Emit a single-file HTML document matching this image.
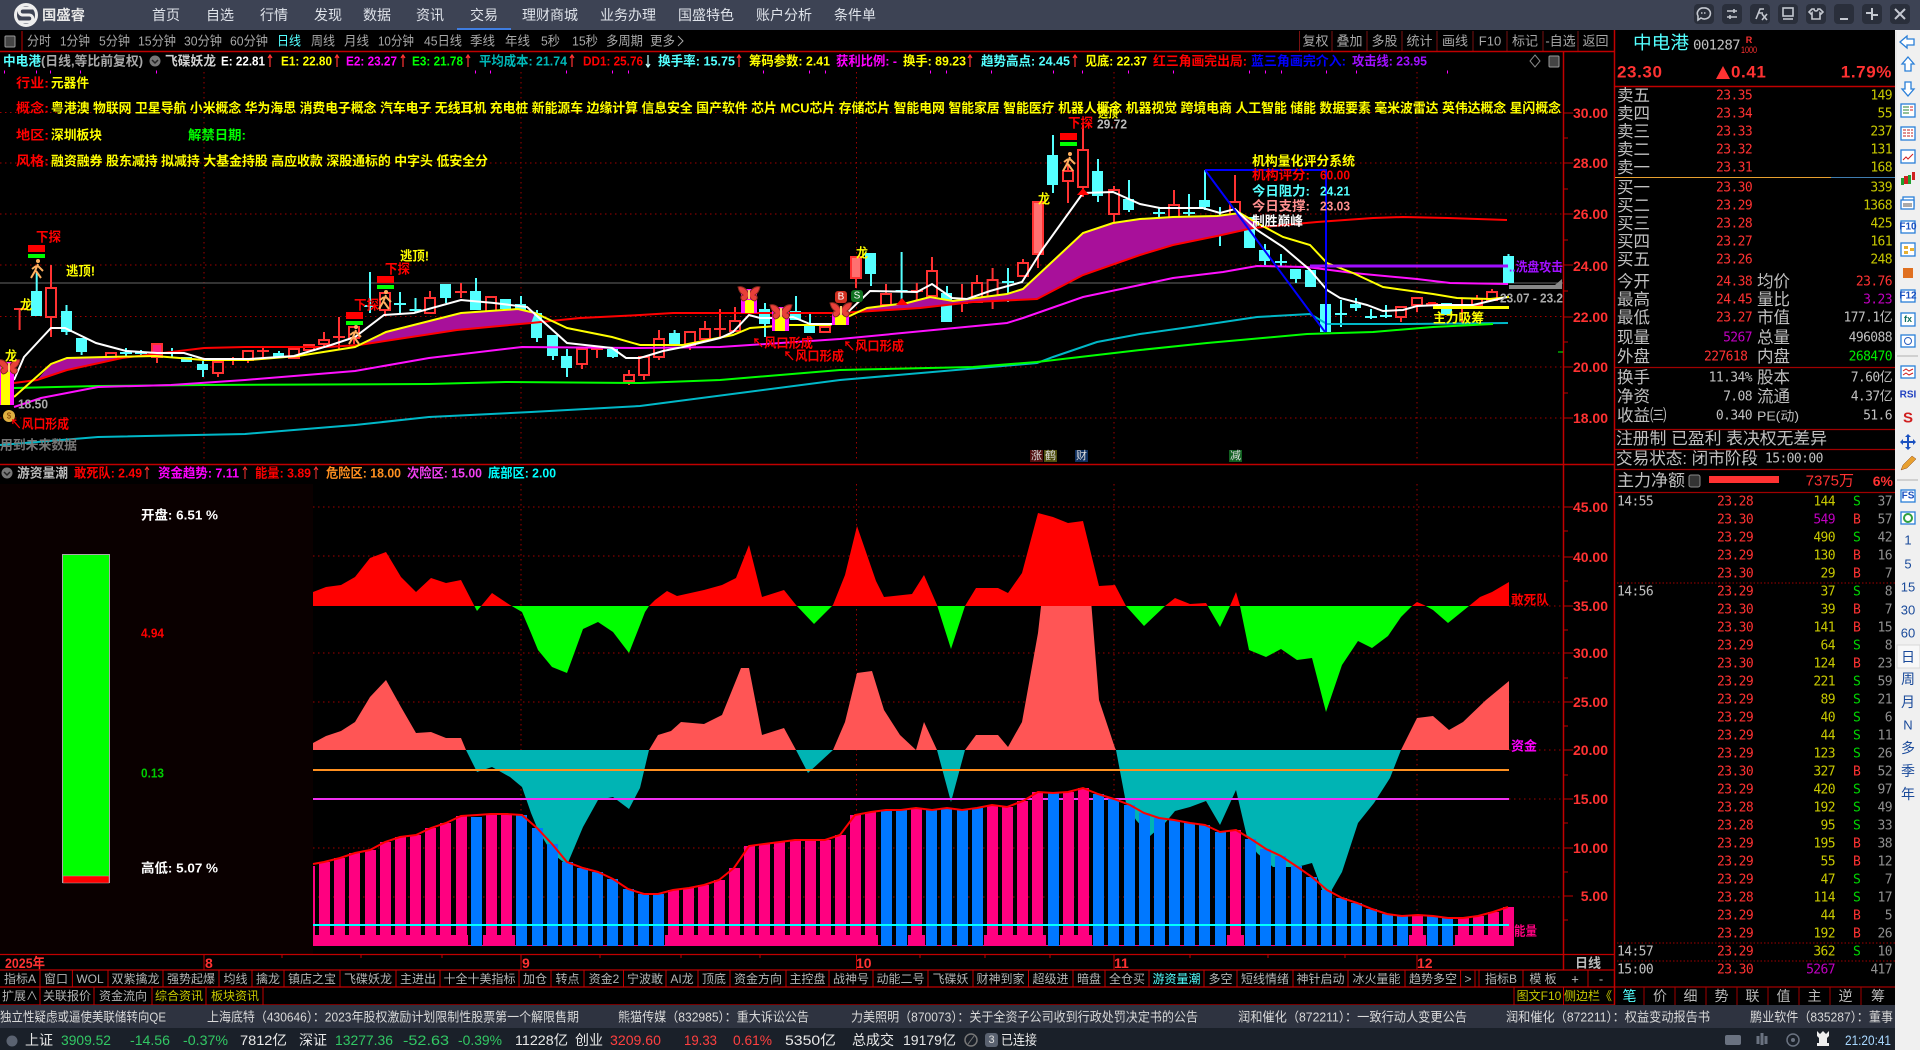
<!DOCTYPE html>
<html lang="zh-CN">
<head>
<meta charset="utf-8">
<title>国盛睿</title>
<style>
html,body{margin:0;padding:0;background:#000;overflow:hidden;width:1920px;height:1050px}
svg{display:block}
text{dominant-baseline:central;font-family:"Liberation Sans","Noto Sans CJK SC",sans-serif;font-size:13px}
.b text,text.b{font-weight:700}
.m text,text.m{font-family:"DejaVu Sans Mono","Liberation Mono",monospace;font-size:13px;letter-spacing:-.6px}
.e{text-anchor:end}
.c text,text.c{text-anchor:middle}
.l text{font-size:16.5px}
.s text{font-size:14px}
</style>
</head>
<body>
<svg xmlns="http://www.w3.org/2000/svg" width="1920" height="1050" viewBox="0 0 1920 1050">
<defs>
<clipPath id="u1"><rect x="300" y="480" width="1220" height="126"/></clipPath>
<clipPath id="d1"><rect x="300" y="606" width="1220" height="340"/></clipPath>
<clipPath id="u2"><rect x="300" y="606" width="1220" height="144"/></clipPath>
<clipPath id="d2"><rect x="300" y="750" width="1220" height="196"/></clipPath>
<g id="bf"><path d="M0 1C-3-6-8-7-11-6-10-2-9 0-6 2-9 3-9 6-6 8-3 8-1 5 0 2 1 5 3 8 6 8 9 6 9 3 6 2 9 0 10-2 11-6 8-7 3-6 0 1Z" fill="#e8403a" stroke="#8a2a20"/><path d="M0-3V6" stroke="#ffcf70" stroke-width="2"/></g>
<g id="pr"><circle cx="1" cy="-8" r="2" fill="#ffb060"/><path d="M1-5-2 2-6 9M1-3 6 2M-1 2 4 9M-1-3-5 0" stroke="#ffb060" stroke-width="2" fill="none"/></g>
<g id="mk"><rect x="-8" y="-6" width="17" height="7" fill="#f00"/><rect x="-8" y="3" width="17" height="4" fill="#0f0"/></g>
</defs>

<rect width="1920" height="1050" fill="#000"/>

<!-- title bar -->
<rect width="1895" height="30" fill="#3d4354"/>
<rect x="1895" width="25" height="30" fill="#3d4354"/>
<rect x="457" y="28" width="54" height="2" fill="#3f7de0"/>
<circle cx="26" cy="15" r="10.5" fill="none" stroke="#eee" stroke-width="3"/>
<path d="M33 8H23C18 8 18 15 23 15H29C34 15 34 22 29 22H18" fill="none" stroke="#eee" stroke-width="3"/>
<text x="42" y="15" class="b" style="font-size:14px" fill="#e8e8e8" textLength="43" lengthAdjust="spacingAndGlyphs">国盛睿</text>
<g fill="#dfe3ea" class="c">
<text x="166" y="15" style="font-size:14px">首页</text>
<text x="220" y="15" style="font-size:14px">自选</text>
<text x="274" y="15" style="font-size:14px">行情</text>
<text x="328" y="15" style="font-size:14px">发现</text>
<text x="377" y="15" style="font-size:14px">数据</text>
<text x="430" y="15" style="font-size:14px">资讯</text>
<text x="484" y="15" style="font-size:14px">交易</text>
<text x="550" y="15" style="font-size:14px">理财商城</text>
<text x="628" y="15" style="font-size:14px">业务办理</text>
<text x="706" y="15" style="font-size:14px">国盛特色</text>
<text x="784" y="15" style="font-size:14px">账户分析</text>
<text x="855" y="15" style="font-size:14px">条件单</text>
</g>
<g fill="#2a2f3b">
<rect x="1694" y="4" width="20" height="20" rx="4"/><rect x="1722" y="4" width="20" height="20" rx="4"/><rect x="1750" y="4" width="20" height="20" rx="4"/><rect x="1778" y="4" width="20" height="20" rx="4"/><rect x="1806" y="4" width="20" height="20" rx="4"/><rect x="1834" y="4" width="20" height="20" rx="4"/><rect x="1862" y="4" width="20" height="20" rx="4"/><rect x="1890" y="4" width="20" height="20" rx="4"/>
</g>
<g fill="none" stroke="#c4c8d0" stroke-width="1.6">
<path d="M1704 8a6 5.500 0 1 1-3 10l-3 2v-4a6 5.500 0 0 1 6-8z"/><path d="M1701 13h6" stroke-dasharray="1.500 1.500"/>
<path d="M1727 11h10M1727 17h10"/><path d="M1734 9v4M1730 15v4"/>
<path d="M1756 19l4-10h4M1758 13h5M1762 14l5 6M1767 14l-5 6"/>
<rect x="1783" y="8" width="10" height="8"/><path d="M1783 19h10"/>
<path d="M1812 9l-3 3 2 2 1-1v6h8v-6l1 1 2-2-3-3h-2a2 2 0 0 1-4 0z"/>
<path d="M1840 19h8" stroke-width="2"/>
<path d="M1872 8v5h-6M1872 20v-5h6" stroke-width="2"/>
<path d="M1895 9l10 10M1905 9l-10 10" stroke-width="2"/>
</g>

<!-- main grid -->
<g stroke="#a00000" stroke-dasharray="1.500 3.500" fill="none">
<path d="M0 112.500H1563M0 163H1563M0 214H1563M0 265H1563M0 316.500H1563M0 367H1563M0 418H1563"/>
<path d="M204 72V460M521 72V460M856.500 72V460M1114 72V460M1417 72V460"/>
<path d="M313 507H1563M313 556H1563M313 653H1563M313 702H1563M313 848H1563M313 897H1563M1509 606H1563M1509 750H1563M1509 799H1563"/>
<path d="M521 484V946M856.500 484V946M1114 484V946M1417 484V946"/>
</g>
<path d="M0 283H1563" stroke="#666" stroke-width="1"/>

<!-- toolbar -->
<rect x="5" y="36" width="10" height="11" rx="1" fill="#444" stroke="#999"/>
<path d="M22 31V51" stroke="#c00000"/>
<g fill="#a8a8a8">
<text x="27" y="41" textLength="24" lengthAdjust="spacingAndGlyphs">分时</text>
<text x="60" y="41" textLength="30" lengthAdjust="spacingAndGlyphs">1分钟</text>
<text x="99" y="41" textLength="31" lengthAdjust="spacingAndGlyphs">5分钟</text>
<text x="138" y="41" textLength="38" lengthAdjust="spacingAndGlyphs">15分钟</text>
<text x="184" y="41" textLength="38" lengthAdjust="spacingAndGlyphs">30分钟</text>
<text x="230" y="41" textLength="38" lengthAdjust="spacingAndGlyphs">60分钟</text>
<text x="277" y="41" textLength="24" lengthAdjust="spacingAndGlyphs" fill="#54ffff">日线</text>
<text x="311" y="41" textLength="24" lengthAdjust="spacingAndGlyphs">周线</text>
<text x="344" y="41" textLength="25" lengthAdjust="spacingAndGlyphs">月线</text>
<text x="378" y="41" textLength="36" lengthAdjust="spacingAndGlyphs">10分钟</text>
<text x="424" y="41" textLength="38" lengthAdjust="spacingAndGlyphs">45日线</text>
<text x="470" y="41" textLength="25" lengthAdjust="spacingAndGlyphs">季线</text>
<text x="505" y="41" textLength="25" lengthAdjust="spacingAndGlyphs">年线</text>
<text x="541" y="41" textLength="19" lengthAdjust="spacingAndGlyphs">5秒</text>
<text x="572" y="41" textLength="26" lengthAdjust="spacingAndGlyphs">15秒</text>
<text x="606" y="41" textLength="37" lengthAdjust="spacingAndGlyphs">多周期</text>
<text x="650" y="41" textLength="25" lengthAdjust="spacingAndGlyphs">更多</text>
<path d="M678 36l5 5-5 5" fill="none" stroke="#a8a8a8"/>
<g class="c">
<text x="1315.500" y="41">复权</text><text x="1349.500" y="41">叠加</text><text x="1384.500" y="41">多股</text><text x="1419.500" y="41">统计</text><text x="1455" y="41">画线</text><text x="1490" y="41">F10</text><text x="1525" y="41">标记</text><text x="1560.500" y="41">-自选</text><text x="1595.500" y="41">返回</text>
</g>
</g>
<path d="M1299.500 31V51M1332 31V51M1367 31V51M1402 31V51M1437 31V51M1473 31V51M1507 31V51M1543 31V51M1578 31V51" stroke="#7a1010"/>
<path d="M0 51.500H1615M1563.500 52V970M1614.500 30V1005" stroke="#c00000" stroke-width="1.500" fill="none"/>

<!-- legend -->
<g class="b">
<text x="3" y="61" fill="#54ffff" textLength="38" lengthAdjust="spacingAndGlyphs">中电港</text>
<text x="41" y="61" fill="#a8a8a8" textLength="102" lengthAdjust="spacingAndGlyphs">(日线,等比前复权)</text>
<text x="165" y="61" fill="#d0d0d0" textLength="51" lengthAdjust="spacingAndGlyphs">飞碟妖龙</text>
<text x="221" y="61" fill="#fff" textLength="44" lengthAdjust="spacingAndGlyphs">E: 22.81</text>
<text x="281" y="61" fill="#ff0" textLength="51" lengthAdjust="spacingAndGlyphs">E1: 22.80</text>
<text x="346" y="61" fill="#f0f" textLength="51" lengthAdjust="spacingAndGlyphs">E2: 23.27</text>
<text x="412" y="61" fill="#0f0" textLength="51" lengthAdjust="spacingAndGlyphs">E3: 21.78</text>
<text x="479" y="61" fill="#00b8b8" textLength="88" lengthAdjust="spacingAndGlyphs">平均成本: 21.74</text>
<text x="583" y="61" fill="#f00" textLength="60" lengthAdjust="spacingAndGlyphs">DD1: 25.76</text>
<text x="658" y="61" fill="#54ffff" textLength="77" lengthAdjust="spacingAndGlyphs">换手率: 15.75</text>
<text x="749" y="61" fill="#ff0" textLength="81" lengthAdjust="spacingAndGlyphs">筹码参数: 2.41</text>
<text x="836" y="61" fill="#f0f" textLength="61" lengthAdjust="spacingAndGlyphs">获利比例: -</text>
<text x="903" y="61" fill="#ff0" textLength="63" lengthAdjust="spacingAndGlyphs">换手: 89.23</text>
<text x="981" y="61" fill="#54ffff" textLength="89" lengthAdjust="spacingAndGlyphs">趋势高点: 24.45</text>
<text x="1085" y="61" fill="#ff0" textLength="62" lengthAdjust="spacingAndGlyphs">见底: 22.37</text>
<text x="1153" y="61" fill="#f00" textLength="94" lengthAdjust="spacingAndGlyphs">红三角画完出局:</text>
<text x="1251" y="61" fill="#0000ff" textLength="95" lengthAdjust="spacingAndGlyphs">蓝三角画完介入:</text>
<text x="1352" y="61" fill="#a010ff" textLength="75" lengthAdjust="spacingAndGlyphs">攻击线: 23.95</text>
</g>
<circle cx="155" cy="61" r="5.500" fill="#777"/><path d="M152 60l3 3 3-3" stroke="#222" fill="none" stroke-width="1.500"/>
<path d="M1535 55l5 6-5 6-5-6z" fill="none" stroke="#888"/>
<rect x="1549" y="56" width="10" height="11" rx="1" fill="#444" stroke="#999"/>
<path d="M270 67V55m-2 3l2-3 2 3M337 67V55m-2 3l2-3 2 3M403 67V55m-2 3l2-3 2 3M468 67V55m-2 3l2-3 2 3M572 67V55m-2 3l2-3 2 3M739 67V55m-2 3l2-3 2 3M970 67V55m-2 3l2-3 2 3M1075 67V55m-2 3l2-3 2 3" stroke="#ff3232" fill="none" stroke-width="1.200"/>
<path d="M648 55V67m-2-3l2 3 2-3" stroke="#c0ffff" fill="none" stroke-width="1.200"/>
<path d="M4 72h1M36 72h1M50 72h1M80 72h1M156 72h1M475 72h1M490 72h1M566 72h1M612 72h1M628 72h1M763 72h1M809 72h1M825 72h1M930 72h1M946 72h1M991 72h1M1053 72h1M1082 72h1M1128 72h1M1173 72h1M1249 72h1M1265 72h1M1281 72h1M1326 72h1M1356 72h1M1447 72h1" stroke="#f0f" stroke-width="3"/>

<!-- concept text -->
<g class="b">
<text x="16" y="83" fill="#f00" textLength="33" lengthAdjust="spacingAndGlyphs">行业:</text>
<text x="51" y="83" fill="#ff0" textLength="38" lengthAdjust="spacingAndGlyphs">元器件</text>
<text x="16" y="108" fill="#f00" textLength="33" lengthAdjust="spacingAndGlyphs">概念:</text>
<text x="51" y="108" fill="#ff0" textLength="1510" lengthAdjust="spacingAndGlyphs">粤港澳 物联网 卫星导航 小米概念 华为海思 消费电子概念 汽车电子 无线耳机 充电桩 新能源车 边缘计算 信息安全 国产软件 芯片 MCU芯片 存储芯片 智能电网 智能家居 智能医疗 机器人概念 机器视觉 跨境电商 人工智能 储能 数据要素 毫米波雷达 英伟达概念 星闪概念</text>
<text x="16" y="135" fill="#f00" textLength="33" lengthAdjust="spacingAndGlyphs">地区:</text>
<text x="51" y="135" fill="#ff0" textLength="51" lengthAdjust="spacingAndGlyphs">深圳板块</text>
<text x="188" y="135" fill="#0f0" textLength="58" lengthAdjust="spacingAndGlyphs">解禁日期:</text>
<text x="16" y="161" fill="#f00" textLength="33" lengthAdjust="spacingAndGlyphs">风格:</text>
<text x="51" y="161" fill="#ff0" textLength="437" lengthAdjust="spacingAndGlyphs">融资融券 股东减持 拟减持 大基金持股 高应收款 深股通标的 中字头 低安全分</text>
</g>

<!-- candles -->
<path fill="none" stroke="#54ffff" stroke-width="2" d="M36.700 273V316M66.500 305V335M81.600 338V355M126 348V358M141 350V356M172 348V358M203 361V377M279 351V358M370 272V313M400 292V313M415.500 298V313M446 284V303M476 278V310M521 296V310M537 310V342M553 335V360M567 349V377M613 349V358M674.600 330V345M765 303V337M810 314V333M871 253V286M901.600 252V307M947 286V322M1008 268V302M1053 135V193M1098 159V202M1129 180V212M1159 207V225M1189 194V226M1205 170V210M1220 207V246M1250 217V248M1265 244V265M1281 254V266M1296 269V283M1326 293V332M1341 300V327M1356 298V311M1371 309V319M1386 305V318M1508.500 254V283M796 296V320M126 353h-6h12M141 353h-6h12M172 353h-6h12M370 306h-6h12M400 304h-6h12M415.500 310h-6h12M901.600 291h-6h12M1008 282h-6h12M1159 213h-6h12M1189 213h-6h12M1220 226h-6h12M1281 262h-6h12M1341 314h-6h12M1371 317h-6h12M1386 316h-6h12"/>
<path fill="#54ffff" d="M31 291h11V316H31zM61 311h11V332H61zM76 338h11V352H76zM197 364h11V370H197zM273 353h11V358H273zM440 284h11V298H440zM470 291h11V310H470zM500 299h11V309H500zM515 304h11V310H515zM531 313h11V338H531zM547 335h11V356H547zM561 356h11V368H561zM607 349h11V357H607zM669 333h11V344H669zM759 309h11V324H759zM790 311h11V320H790zM804 324h11V333H804zM865 253h11V274H865zM941 293h11V322H941zM1047 155h11V185H1047zM1092 171h11V196H1092zM1123 199h11V210H1123zM1199 200h11V207H1199zM1244 217h11V248H1244zM1259 250h11V261H1259zM1290 269h11V279H1290zM1305 270h11V287H1305zM1320 304h11V332H1320zM1350 304h11V308H1350zM1441 303h11V315H1441zM1503 256h11V283H1503zM181 357h11V362H181z"/>
<path fill="none" stroke="#ff3232" stroke-width="2" d="M19.600 308V330M51 265V337M218 373V377M233 357V365M248 360V363M263 347V357M324 332V347M339 317V349M354 338V344M385 310V316M430 291V298M461 283V298M491 313V318M582 364V369M597 349V358M629 370V385M644 375V380M659 330V360M690 345V350M705 321V329M720 309V338M735 307V321M856 278V288M886 284V294M916.800 283V302M932 257V271M962 284V312M977 275V283M992.600 268V309M1023 259V263M1038 254V268M1068 164V203M1083 125V197M1114 186V228M1174 190V205M1235 175V232M1401 317V322M1417 298V312M1477 295V299M1492 289V292M157 344V363M1462 298V323M14 309H26M227 360H239M257 351H269M333 337H345M455 292H467M591 349H603M714 329H726M911 291H923M956 303H968M1426 304H1438"/>
<path fill="#000" stroke="#ff3232" stroke-width="2" d="M46 288h10V317H46zM106 353h10V358H106zM213 362h10V373H213zM243 351h10V360H243zM289 349h10V358H289zM304 345h10V350H304zM319 340h10V344H319zM349 327h10V338H349zM380 293h10V310H380zM425 298h10V313H425zM486 297h10V313H486zM577 349h10V364H577zM624 375h10V381H624zM639 357h10V375H639zM654 339h10V357H654zM685 332h10V345H685zM700 329h10V339H700zM730 321h10V331H730zM820 327h10V332H820zM881 294h10V305H881zM927 271h10V296H927zM972 283h10V302H972zM987.600 280h10V300H987.600zM1018 263h10V276H1018zM1063 171h10V181H1063zM1078 150h10V187H1078zM1109 190h10V214H1109zM1139 222h10V230H1139zM1169 205h10V224H1169zM1230 202h10V227H1230zM1396 307h10V317H1396zM1412 298h10V305H1412zM1472 299h10V305H1472zM1487 292h10V300H1487z"/>
<path fill="#ff7070" stroke="#ff3232" stroke-width="2" d="M851 257h10V278H851zM1033 202h10V254H1033z"/>
<path fill="#ff2080" stroke="#ff3232" stroke-width="2" d="M152 344h10V357H152z"/>
<path fill="#ff1010" d="M1428 302h8v4h-8z"/>

<!-- purple fill -->
<path fill="#a8109a" d="M37 380L51 364 67 358 106 357 122 358 67 370ZM355 347L386 332 461 313 518 309 535 313 531 323 457 330 359 345ZM853 312L867 308 907 303 930 297 953 301 1007 294 1023 289 1083 233 1113 223 1140 219 1173 217 1217 216 1240 213 1257 223 1253 228 1217 236 1173 245 1140 255 1083 275 1037 299 973 302 920 308Z"/>

<!-- MA lines -->
<g fill="none" stroke-width="2">
<polyline stroke="#00b8c8" points="0,445 98,437 245,434 355,425 429,417 531,412 640,406 840,380 1037,363 1053,357 1097,342 1140,334 1190,327 1257,317 1310,314 1327,324 1407,324 1508,323"/>
<polyline stroke="#00ff00" points="14,388 98,386 204,385 429,384 506,382 640,383 720,380 840,370 973,367 1037,362 1140,350 1207,343 1307,334 1373,332 1433,327 1493,324"/>
<polyline stroke="#ff10ff" points="14,407 41,398 98,387 171,385 245,380 355,371 429,358 522,347 640,348 720,347 840,339 1007,323 1023,318 1083,297 1140,285 1173,278 1223,272 1257,266 1307,267 1353,273 1417,279 1450,283 1508,284"/>
<polyline stroke="#ff0000" points="14,383 37,380 67,370 122,358 171,352 204,348 245,347 327,347 359,345 457,330 531,323 580,318 640,315 673,313 840,313 920,308 973,302 1037,299 1083,275 1140,255 1173,245 1217,236 1253,228 1317,222 1373,218 1403,217 1448,218 1507,220"/>
<polyline stroke="#ffff00" points="14,397 51,364 67,358 106,357 155,356 204,360 249,360 298,356 355,347 386,332 461,313 518,309 535,313 567,328 612,337 640,345 683,345 733,335 750,328 790,325 830,325 867,308 907,303 930,297 953,301 1007,294 1023,289 1083,233 1113,223 1140,219 1173,217 1217,216 1240,213 1257,223 1283,237 1310,245 1327,263 1353,273 1383,287 1433,294 1457,298 1490,299 1509,297"/>
<polyline stroke="#ffffff" points="14,380 24,357 51,328 65,328 96,343 126,351 157,353 184,353 204,359 249,359 294,356 331,345 355,337 384,315 414,313 461,300 494,303 527,307 567,343 612,348 626,358 640,358 663,351 683,347 720,338 733,332 749,315 760,318 780,318 793,317 810,324 832,324 848,312 870,291 917,292 932,284 952,298 967,299 990,291 1022,282 1042,250 1083,193 1113,192 1140,204 1160,208 1203,208 1220,213 1235,209 1257,230 1283,247 1310,270 1327,290 1340,298 1367,305 1383,311 1403,310 1417,306 1440,305 1473,305 1507,297"/>
</g>
<path d="M1433 307.500H1509" stroke="#ff0" stroke-width="3"/>
<path d="M1310 266H1508" stroke="#a010ff" stroke-width="3"/>
<path d="M1205 170H1326V332M1205 170L1325 332" fill="none" stroke="#0000ff" stroke-width="2"/>
<path d="M1509 285H1562V289H1509ZM1555 285L1562 279V285Z" fill="#888"/>

<!-- columns -->
<path fill="#ff10ff" d="M0 362H14V405H0ZM741 289H757V313H741ZM772 307H789V331H772ZM832 313H849V325H832Z"/>
<path fill="#ffff00" d="M1 367H10V405H1ZM745 300H754V313H745ZM775 316H785V331H775ZM835 315H846V325H835Z"/>
<use href="#bf" x="9" y="366"/><use href="#bf" x="749" y="293"/><use href="#bf" x="781" y="311"/><use href="#bf" x="841" y="309"/>

<!-- markers -->
<use href="#mk" x="36" y="251"/><use href="#pr" x="37" y="269"/>
<use href="#mk" x="385" y="282"/><use href="#pr" x="385" y="300"/>
<use href="#mk" x="354" y="318"/><use href="#pr" x="355" y="335"/>
<use href="#mk" x="1068" y="139"/><use href="#pr" x="1069" y="162"/>
<path d="M1083 188l-6 7h12zM902 298l-6 7h12z" fill="#f00"/>
<rect x="835" y="291" width="12" height="12" rx="3" fill="#d03020"/><text x="841" y="297" class="c" style="font-size:10px" fill="#fff">B</text>
<rect x="851" y="290" width="12" height="12" rx="3" fill="#107020"/><text x="857" y="296" class="c" style="font-size:10px" fill="#fff">S</text>
<circle cx="9" cy="416" r="6" fill="#e0b040"/><text x="9" y="416" class="c" style="font-size:8px" fill="#804000">$</text>

<g class="b">
<text x="36" y="237" fill="#f00" textLength="25" lengthAdjust="spacingAndGlyphs">下探</text>
<text x="66" y="271" fill="#ff0" textLength="29" lengthAdjust="spacingAndGlyphs">逃顶!</text>
<text x="20" y="305" fill="#ff0" textLength="12" lengthAdjust="spacingAndGlyphs">龙</text>
<text x="5" y="356" fill="#ff0" textLength="12" lengthAdjust="spacingAndGlyphs">龙</text>
<text x="400" y="256" fill="#ff0" textLength="29" lengthAdjust="spacingAndGlyphs">逃顶!</text>
<text x="385" y="269" fill="#f00" textLength="25" lengthAdjust="spacingAndGlyphs">下探</text>
<text x="354" y="305" fill="#f00" textLength="25" lengthAdjust="spacingAndGlyphs">下探</text>
<text x="1068" y="123" fill="#f00" textLength="25" lengthAdjust="spacingAndGlyphs">下探</text>
<text x="1098" y="113" fill="#ff0" textLength="20" lengthAdjust="spacingAndGlyphs">逃顶</text>
<text x="1097" y="124" fill="#bbb" textLength="30" lengthAdjust="spacingAndGlyphs">29.72</text>
<text x="1038" y="199" fill="#ff0" textLength="12" lengthAdjust="spacingAndGlyphs">龙</text>
<text x="856" y="253" fill="#ff0" textLength="12" lengthAdjust="spacingAndGlyphs">龙</text>
<text x="18" y="404" fill="#aaa" textLength="30" lengthAdjust="spacingAndGlyphs">18.50</text>
<text x="10" y="424" fill="#f00" textLength="59" lengthAdjust="spacingAndGlyphs">↖风口形成</text>
<text x="0" y="445" fill="#777" textLength="77" lengthAdjust="spacingAndGlyphs">用到未来数据</text>
<text x="752" y="343" fill="#f00" textLength="61" lengthAdjust="spacingAndGlyphs">↖风口形成</text>
<text x="783" y="356" fill="#f00" textLength="61" lengthAdjust="spacingAndGlyphs">↖风口形成</text>
<text x="843" y="346" fill="#f00" textLength="61" lengthAdjust="spacingAndGlyphs">↖风口形成</text>
<text x="1252" y="161" fill="#ff0" textLength="103" lengthAdjust="spacingAndGlyphs">机构量化评分系统</text>
<text x="1252" y="175" fill="#f00" textLength="58" lengthAdjust="spacingAndGlyphs">机构评分:</text><text x="1320" y="175" fill="#f00" textLength="30" lengthAdjust="spacingAndGlyphs">60.00</text>
<text x="1252" y="191" fill="#54ffff" textLength="58" lengthAdjust="spacingAndGlyphs">今日阻力:</text><text x="1320" y="191" fill="#54ffff" textLength="30" lengthAdjust="spacingAndGlyphs">24.21</text>
<text x="1252" y="206" fill="#ff9090" textLength="58" lengthAdjust="spacingAndGlyphs">今日支撑:</text><text x="1320" y="206" fill="#ff9090" textLength="30" lengthAdjust="spacingAndGlyphs">23.03</text>
<text x="1252" y="221" fill="#fff" textLength="51" lengthAdjust="spacingAndGlyphs">制胜巅峰</text>
<text x="1433" y="318" fill="#ff0" textLength="51" lengthAdjust="spacingAndGlyphs">主力吸筹</text>
<text x="1509" y="267" fill="#a010ff" textLength="54" lengthAdjust="spacingAndGlyphs">..洗盘攻击</text>
<text x="1500" y="298" fill="#aaa" textLength="63" lengthAdjust="spacingAndGlyphs">23.07 - 23.2</text>
</g>
<rect x="1030" y="450" width="13" height="12" fill="#501010"/><rect x="1044" y="450" width="13" height="12" fill="#505010"/><rect x="1075" y="450" width="13" height="12" fill="#103060"/><rect x="1229" y="450" width="13" height="12" fill="#106020"/>
<g class="c" fill="#ddd"><text x="1036.500" y="456" style="font-size:11px">涨</text><text x="1050.500" y="456" style="font-size:11px">鹤</text><text x="1081.500" y="456" style="font-size:11px">财</text><text x="1235.500" y="456" style="font-size:11px">减</text></g>

<!-- axis upper -->
<g class="b e" fill="#ff3232">
<text x="1608" y="113" style="font-size:14px" class="e">30.00</text><text x="1608" y="163" style="font-size:14px" class="e">28.00</text><text x="1608" y="214" style="font-size:14px" class="e">26.00</text><text x="1608" y="266" style="font-size:14px" class="e">24.00</text><text x="1608" y="317" style="font-size:14px" class="e">22.00</text><text x="1608" y="367" style="font-size:14px" class="e">20.00</text><text x="1608" y="418" style="font-size:14px" class="e">18.00</text>
<text x="1608" y="507" style="font-size:14px" class="e">45.00</text><text x="1608" y="557" style="font-size:14px" class="e">40.00</text><text x="1608" y="606" style="font-size:14px" class="e">35.00</text><text x="1608" y="653" style="font-size:14px" class="e">30.00</text><text x="1608" y="702" style="font-size:14px" class="e">25.00</text><text x="1608" y="750" style="font-size:14px" class="e">20.00</text><text x="1608" y="799" style="font-size:14px" class="e">15.00</text><text x="1608" y="848" style="font-size:14px" class="e">10.00</text><text x="1608" y="896" style="font-size:14px" class="e">5.00</text>
</g>
<path stroke="#c00000" d="M1563 113h10M1563 138h5M1563 163h10M1563 189h5M1563 214h10M1563 240h5M1563 265h10M1563 291h5M1563 317h10M1563 342h5M1563 367h10M1563 393h5M1563 418h10M1563 507h10M1563 531h5M1563 557h10M1563 581h5M1563 606h10M1563 630h5M1563 653h10M1563 678h5M1563 702h10M1563 726h5M1563 750h10M1563 775h5M1563 799h10M1563 823h5M1563 848h10M1563 872h5M1563 896h10M1563 920h5"/>
<path stroke="#0f0" d="M1558 352h5"/>

<!-- lower panel -->
<path d="M0 464.500H1615" stroke="#c00000" stroke-width="1.500"/>
<rect x="0" y="484" width="313" height="470" fill="#0a0000"/>
<circle cx="7" cy="473" r="5.500" fill="#777"/><path d="M4 472l3 3 3-3" stroke="#222" fill="none" stroke-width="1.500"/>
<g class="b">
<text x="17" y="473" fill="#bbb" textLength="51" lengthAdjust="spacingAndGlyphs">游资量潮</text>
<text x="74" y="473" fill="#f00" textLength="68" lengthAdjust="spacingAndGlyphs">敢死队: 2.49</text>
<text x="158" y="473" fill="#f0f" textLength="81" lengthAdjust="spacingAndGlyphs">资金趋势: 7.11</text>
<text x="255" y="473" fill="#f00" textLength="56" lengthAdjust="spacingAndGlyphs">能量: 3.89</text>
<text x="326" y="473" fill="#ff9020" textLength="75" lengthAdjust="spacingAndGlyphs">危险区: 18.00</text>
<text x="407" y="473" fill="#f040f0" textLength="75" lengthAdjust="spacingAndGlyphs">次险区: 15.00</text>
<text x="488" y="473" fill="#00ffff" textLength="68" lengthAdjust="spacingAndGlyphs">底部区: 2.00</text>
<text x="141" y="515" fill="#fff" textLength="77" lengthAdjust="spacingAndGlyphs">开盘: 6.51 %</text>
<text x="141" y="633" fill="#f00" textLength="23" lengthAdjust="spacingAndGlyphs">4.94</text>
<text x="141" y="773" fill="#0c0" textLength="23" lengthAdjust="spacingAndGlyphs">0.13</text>
<text x="141" y="868" fill="#fff" textLength="77" lengthAdjust="spacingAndGlyphs">高低: 5.07 %</text>
<text x="1511" y="600" fill="#f00" textLength="38" lengthAdjust="spacingAndGlyphs">敢死队</text>
<text x="1511" y="746" fill="#f0f" textLength="26" lengthAdjust="spacingAndGlyphs">资金</text>
<text x="1514" y="931" fill="#ff0080" textLength="23" lengthAdjust="spacingAndGlyphs">能量</text>
</g>
<path d="M147 479V467m-2 3l2-3 2 3M245 479V467m-2 3l2-3 2 3M316 479V467m-2 3l2-3 2 3" stroke="#ff3232" fill="none"/>
<rect x="62.500" y="554.500" width="47" height="328" fill="#00ff00" stroke="#aaa"/>
<rect x="63" y="876" width="46" height="7" fill="#f00" stroke="#aaa" stroke-width=".5"/>

<!-- series 2 -->
<g>
<polygon clip-path="url(#u2)" fill="#ff5555" points="313,750 313,743 326,736 341,731 355,722 370,697 386,680 401,707 416,733 431,732 446,738 461,738 466,750 649,750 658,735 671,731 681,722 704,724 722,715 741,668 749,668 762,735 784,728 796,750 833,750 845,722 857,673 872,671 884,710 900,735 916,750 924,722 937,750 965,750 976,735 998,735 1008,747 1022,722 1038,633 1053,500 1083,500 1099,700 1115,748 1116,750 1401,750 1417,718 1433,716 1449,730 1463,722 1486,700 1509,681 1509,750"/>
<polygon clip-path="url(#d2)" fill="#00b4b4" points="466,750 477,772 492,767 510,777 522,787 531,813 538,830 552,853 567,865 583,827 598,800 613,797 629,809 640,788 649,750 796,750 808,773 833,750 916,750 937,750 951,802 965,750 1116,750 1126,803 1136,820 1150,836 1165,823 1175,811 1190,807 1206,801 1220,825 1236,790 1247,837 1257,853 1273,867 1297,867 1312,863 1326,900 1342,872 1358,823 1374,803 1390,778 1401,750"/>
</g>
<!-- series 1 -->
<g>
<polygon clip-path="url(#u1)" fill="#ff0000" points="313,606 313,592 326,587 341,585 355,577 370,558 386,552 401,577 416,592 431,578 446,583 461,580 477,611 492,593 510,605 522,612 531,633 538,650 552,667 567,673 583,629 598,622 613,632 629,653 640,625 645,612 649,606 655,600 667,591 677,596 704,590 722,585 736,578 749,545 762,597 784,590 796,605 814,624 833,605 845,575 857,526 876,581 884,597 912,594 924,575 937,605 951,649 965,606 976,588 998,588 1008,593 1022,573 1038,513 1053,517 1068,523 1083,521 1099,586 1115,585 1126,606 1144,626 1165,606 1175,598 1190,604 1206,603 1220,627 1230,606 1236,592 1240,606 1249,650 1266,657 1281,649 1297,660 1312,658 1326,712 1342,665 1358,641 1372,648 1388,636 1401,617 1412,606 1417,602 1424,605 1433,610 1448,623 1469,606 1480,597 1492,592 1509,582 1509,606"/>
<polygon clip-path="url(#d1)" fill="#00ff00" points="313,606 313,592 326,587 341,585 355,577 370,558 386,552 401,577 416,592 431,578 446,583 461,580 477,611 492,593 510,605 522,612 531,633 538,650 552,667 567,673 583,629 598,622 613,632 629,653 640,625 645,612 649,606 655,600 667,591 677,596 704,590 722,585 736,578 749,545 762,597 784,590 796,605 814,624 833,605 845,575 857,526 876,581 884,597 912,594 924,575 937,605 951,649 965,606 976,588 998,588 1008,593 1022,573 1038,513 1053,517 1068,523 1083,521 1099,586 1115,585 1126,606 1144,626 1165,606 1175,598 1190,604 1206,603 1220,627 1230,606 1236,592 1240,606 1249,650 1266,657 1281,649 1297,660 1312,658 1326,712 1342,665 1358,641 1372,648 1388,636 1401,617 1412,606 1417,602 1424,605 1433,610 1448,623 1469,606 1480,597 1492,592 1509,582 1509,606"/>
</g>
<path d="M313 770H1509" stroke="#ff9020" stroke-width="2"/>
<path d="M313 799H1509" stroke="#f030f0" stroke-width="2"/>

<!-- bars -->
<path fill="#ff0080" d="M313 935H468V946H313ZM483 935H515V946H483ZM665 935H878V946H665ZM908 935H925V946H908ZM984 935H1046V946H984ZM1060 935H1092V946H1060ZM1227 935H1244V946H1227ZM1409 935H1426V946H1409ZM1455 935H1514V946H1455ZM313 945H1514V946H313Z
M313 866h2V946h-2zM319 862h11V946h-11zM334 858h11V946h-11zM349 853h11V946h-11zM365 850h11V946h-11zM380 842h11V946h-11zM395 837h11V946h-11zM410 835h11V946h-11zM425 828h11V946h-11zM440 823h11V946h-11zM456 816h11V946h-11zM486 814h11V946h-11zM501 814h11V946h-11zM668 890h11V946h-11zM683 888h11V946h-11zM698 885h11V946h-11zM714 880h11V946h-11zM729 868h11V946h-11zM744 846h11V946h-11zM759 844h11V946h-11zM774 842h11V946h-11zM790 840h11V946h-11zM805 840h11V946h-11zM820 840h11V946h-11zM835 835h11V946h-11zM850 815h11V946h-11zM865 812h11V946h-11zM911 808h11V946h-11zM987 805h11V946h-11zM1002 807h11V946h-11zM1017 801h11V946h-11zM1032 792h11V946h-11zM1063 792h11V946h-11zM1078 788h11V946h-11zM1230 830h11V946h-11zM1412 915h11V946h-11zM1458 918h11V946h-11zM1473 916h11V946h-11zM1488 912h11V946h-11zM1503 907h11V946h-11z"/>
<path fill="#0078ff" d="M471 817h11V946h-11zM516 815h11V946h-11zM532 828h11V946h-11zM547 844h11V946h-11zM562 862h11V946h-11zM577 868h11V946h-11zM592 872h11V946h-11zM607 879h11V946h-11zM623 889h11V946h-11zM638 894h11V946h-11zM653 894h11V946h-11zM881 810h11V946h-11zM896 810h11V946h-11zM926 810h11V946h-11zM941 808h11V946h-11zM957 810h11V946h-11zM972 808h11V946h-11zM1048 793h11V946h-11zM1093 794h11V946h-11zM1108 799h11V946h-11zM1124 805h11V946h-11zM1139 813h11V946h-11zM1154 818h11V946h-11zM1169 820h11V946h-11zM1184 823h11V946h-11zM1199 825h11V946h-11zM1215 832h11V946h-11zM1245 839h11V946h-11zM1260 849h11V946h-11zM1275 856h11V946h-11zM1291 866h11V946h-11zM1306 877h11V946h-11zM1321 890h11V946h-11zM1336 898h11V946h-11zM1351 903h11V946h-11zM1366 909h11V946h-11zM1382 914h11V946h-11zM1397 916h11V946h-11zM1427 916h11V946h-11zM1442 918h11V946h-11z"/>
<polyline fill="none" stroke="#f00" stroke-width="2" points="313,864 324,862 340,858 355,853 370,850 385,842 400,837 416,835 431,828 446,823 461,816 477,815 491,814 507,814 522,815 537,828 552,844 567,862 583,868 598,872 613,879 628,889 644,894 658,894 673,890 689,888 704,885 719,880 734,868 749,846 764,844 780,842 795,840 810,840 825,840 840,835 855,815 871,812 886,810 901,810 916,808 932,810 947,808 962,810 977,808 992,805 1007,807 1023,801 1038,792 1053,793 1068,792 1083,788 1098,794 1114,799 1130,805 1144,813 1159,818 1174,820 1190,823 1205,825 1220,832 1236,830 1251,839 1266,849 1281,856 1296,866 1312,877 1327,890 1342,898 1357,903 1372,909 1387,914 1402,916 1418,915 1433,916 1448,918 1463,918 1478,916 1493,912 1508,907"/>
<path d="M313 925H1509" stroke="#00ffff" stroke-width="2"/>

<!-- time axis -->
<path d="M0 954.500H1615M0 970H1615M0 987H1615M0 1005H1615" stroke="#c00000" stroke-width="1.200"/>
<path d="M204 954v16M521 954v16M856.500 954v16M1114 954v16M1417 954v16M282 954v4M361 954v4M442 954v4M600 954v4M681 954v4M760 954v4M920 954v4M985 954v4M1050 954v4M1190 954v4M1268 954v4M1345 954v4" stroke="#c00000"/>
<g class="b" fill="#ff3232">
<text x="5" y="963" style="font-size:14px" textLength="40" lengthAdjust="spacingAndGlyphs">2025年</text>
<text x="205" y="963" style="font-size:14px">8</text><text x="522" y="963" style="font-size:14px">9</text><text x="856" y="963" style="font-size:14px">10</text><text x="1114" y="963" style="font-size:14px">11</text><text x="1417" y="963" style="font-size:14px">12</text>
</g>
<g class="c" fill="#bbb"><text x="1588" y="963" style="font-size:13px;font-weight:700">日线</text><text x="1575" y="979">+</text><text x="1601" y="979">-</text></g>
<path d="M1588 970V987" stroke="#c00000"/>

<!-- tabs -->
<path d="M40 970V987M72.400 970V987M108 970V987M163 970V987M219 970V987M252 970V987M284 970V987M340 970V987M396 970V987M440 970V987M519 970V987M551 970V987M584 970V987M623.500 970V987M666 970V987M698 970V987M730 970V987M786 970V987M829 970V987M873 970V987M928 970V987M973 970V987M1028.500 970V987M1073 970V987M1105 970V987M1149 970V987M1204 970V987M1237 970V987M1293 970V987M1348 970V987M1405 970V987M1460.600 970V987M1475 970V987M1479 970V987M1523 970V987M40 987V1005M94 987V1005M152 987V1005M206 987V1005M263 987V1005M1514 987V1005M1563.500 987V1005" stroke="#c00000"/>
<g class="c" fill="#b4b4b4">
<text x="20" y="979" style="font-size:12px">指标A</text><text x="56" y="979" style="font-size:12px">窗口</text><text x="90" y="979" style="font-size:12px">WOL</text><text x="135.500" y="979" style="font-size:12px">双紫擒龙</text><text x="191" y="979" style="font-size:12px">强势起爆</text><text x="235.500" y="979" style="font-size:12px">均线</text><text x="268" y="979" style="font-size:12px">擒龙</text><text x="312" y="979" style="font-size:12px">镇店之宝</text><text x="368" y="979" style="font-size:12px">飞碟妖龙</text><text x="418" y="979" style="font-size:12px">主进出</text><text x="479.500" y="979" style="font-size:12px">十全十美指标</text><text x="535" y="979" style="font-size:12px">加仓</text><text x="567.500" y="979" style="font-size:12px">转点</text><text x="604" y="979" style="font-size:12px">资金2</text><text x="645" y="979" style="font-size:12px">宁波敢</text><text x="682" y="979" style="font-size:12px">AI龙</text><text x="714" y="979" style="font-size:12px">顶底</text><text x="758" y="979" style="font-size:12px">资金方向</text><text x="807.500" y="979" style="font-size:12px">主控盘</text><text x="851" y="979" style="font-size:12px">战神号</text><text x="900.500" y="979" style="font-size:12px">动能二号</text><text x="950.500" y="979" style="font-size:12px">飞碟妖</text><text x="1000.500" y="979" style="font-size:12px">财神到家</text><text x="1050.500" y="979" style="font-size:12px">超级进</text><text x="1089" y="979" style="font-size:12px">暗盘</text><text x="1127" y="979" style="font-size:12px">全仓买</text><text x="1176.500" y="979" style="font-size:12px;fill:#54ffff">游资量潮</text><text x="1220.500" y="979" style="font-size:12px">多空</text><text x="1265" y="979" style="font-size:12px">短线情绪</text><text x="1320.500" y="979" style="font-size:12px">神针启动</text><text x="1376.500" y="979" style="font-size:12px">冰火量能</text><text x="1433" y="979" style="font-size:12px">趋势多空</text><text x="1468" y="979" style="font-size:12px">&gt;</text><text x="1501" y="979" style="font-size:12px">指标B</text><text x="1543" y="979" style="font-size:12px">模 板</text>
<text x="20" y="996" style="font-size:12px">扩展∧</text><text x="67" y="996" style="font-size:12px">关联报价</text><text x="123" y="996" style="font-size:12px">资金流向</text>
<text x="179" y="996" style="font-size:12px;fill:#c8c800">综合资讯</text><text x="235" y="996" style="font-size:12px;fill:#c8c800">板块资讯</text>
<text x="1539" y="996" style="font-size:12px;fill:#c8c800">图文F10</text><text x="1588" y="996" style="font-size:12px;fill:#c8c800">侧边栏《</text>
</g>

<!-- ticker & status -->
<rect y="1005" width="1895" height="23" fill="#2e3340"/>
<rect y="1028" width="1895" height="22" fill="#1a2029"/>
<g fill="#d8d8d8">
<text x="0" y="1017" style="font-size:13px" textLength="166" lengthAdjust="spacingAndGlyphs">独立性疑虑或逼使美联储转向QE</text>
<text x="207" y="1017" style="font-size:13px" textLength="372" lengthAdjust="spacingAndGlyphs">上海底特（430646）：2023年股权激励计划限制性股票第一个解限售期</text>
<text x="618" y="1017" style="font-size:13px" textLength="191" lengthAdjust="spacingAndGlyphs">熊猫传媒（832985）：重大诉讼公告</text>
<text x="851" y="1017" style="font-size:13px" textLength="347" lengthAdjust="spacingAndGlyphs">力美照明（870073）：关于全资子公司收到行政处罚决定书的公告</text>
<text x="1238" y="1017" style="font-size:13px" textLength="229" lengthAdjust="spacingAndGlyphs">润和催化（872211）：一致行动人变更公告</text>
<text x="1506" y="1017" style="font-size:13px" textLength="204" lengthAdjust="spacingAndGlyphs">润和催化（872211）：权益变动报告书</text>
<text x="1750" y="1017" style="font-size:13px" textLength="143" lengthAdjust="spacingAndGlyphs">鹏业软件（835287）：董事</text>
</g>
<circle cx="12" cy="1041" r="5.500" fill="#5a6270"/>
<g fill="#e8e8e8" class="s">
<text x="25" y="1040" textLength="28" lengthAdjust="spacingAndGlyphs">上证</text>
<text x="240" y="1040" textLength="47" lengthAdjust="spacingAndGlyphs">7812亿</text>
<text x="299" y="1040" textLength="28" lengthAdjust="spacingAndGlyphs">深证</text>
<text x="515" y="1040" textLength="53" lengthAdjust="spacingAndGlyphs">11228亿</text>
<text x="575" y="1040" textLength="28" lengthAdjust="spacingAndGlyphs">创业</text>
<text x="785" y="1040" textLength="51" lengthAdjust="spacingAndGlyphs">5350亿</text>
<text x="852" y="1040" textLength="42" lengthAdjust="spacingAndGlyphs">总成交</text>
<text x="903" y="1040" textLength="53" lengthAdjust="spacingAndGlyphs">19179亿</text>
<text x="1001" y="1040" textLength="36" lengthAdjust="spacingAndGlyphs">已连接</text>
</g>
<g fill="#32c864" class="s">
<text x="61" y="1040" textLength="50" lengthAdjust="spacingAndGlyphs">3909.52</text><text x="130" y="1040" textLength="40" lengthAdjust="spacingAndGlyphs">-14.56</text><text x="183" y="1040" textLength="45" lengthAdjust="spacingAndGlyphs">-0.37%</text>
<text x="335" y="1040" textLength="58" lengthAdjust="spacingAndGlyphs">13277.36</text><text x="403" y="1040" textLength="46" lengthAdjust="spacingAndGlyphs">-52.63</text><text x="458" y="1040" textLength="44" lengthAdjust="spacingAndGlyphs">-0.39%</text>
</g>
<g fill="#ff4040" class="s">
<text x="610" y="1040" textLength="51" lengthAdjust="spacingAndGlyphs">3209.60</text><text x="684" y="1040" textLength="33" lengthAdjust="spacingAndGlyphs">19.33</text><text x="733" y="1040" textLength="39" lengthAdjust="spacingAndGlyphs">0.61%</text>
</g>
<circle cx="971" cy="1040" r="6" fill="none" stroke="#777" stroke-width="1.500"/><path d="M968 1044l6-8" stroke="#777"/>
<rect x="985" y="1033" width="13" height="14" rx="3" fill="#5a6270"/><text x="991.500" y="1040" class="c" style="font-size:11px" fill="#ddd">3</text>
<rect x="1725" y="1035" width="16" height="10" rx="2" fill="#6a7280"/>
<path d="M1758 1036v8M1762 1033v12M1766 1036v8" stroke="#6a7280" stroke-width="3"/>
<circle cx="1793" cy="1040" r="6" fill="none" stroke="#6a7280" stroke-width="1.500"/><circle cx="1793" cy="1040" r="2" fill="#6a7280"/>
<path d="M1817 1031l3 3 3-3 3 3 3-3v5l-2 2v5h2v3h-12v-3h2v-5l-2-2z" fill="#eee"/>
<text x="1845" y="1040" fill="#a8d8ff" style="font-size:14px" textLength="46" lengthAdjust="spacingAndGlyphs">21:20:41</text>

<!-- right panel -->
<text x="1633" y="43" fill="#54ffff" style="font-size:18px" textLength="56" lengthAdjust="spacingAndGlyphs">中电港</text>
<text x="1693" y="46" class="m" fill="#c0c0c0" style="font-size:13px" textLength="47" lengthAdjust="spacingAndGlyphs">001287</text>
<text x="1749" y="40" fill="#ff3232" class="c b" style="font-size:9px">R</text>
<text x="1749" y="50" fill="#ff3232" class="c" style="font-size:9px" textLength="16" lengthAdjust="spacingAndGlyphs">1000</text>
<g class="b" fill="#ff3232">
<text x="1617" y="72" style="font-size:17px;letter-spacing:.6px">23.30</text>
<path d="M1716 79l7-13 7 13z"/>
<text x="1731" y="72" style="font-size:17px;letter-spacing:.6px">0.41</text>
<text x="1892" y="72" style="font-size:17px;letter-spacing:.6px" class="e">1.79%</text>
</g>
<path d="M1615 86.500H1895" stroke="#c00000" stroke-width="1.500"/>
<path d="M1615 177.500H1831" stroke="#e8a030"/><path d="M1831 177.500H1895" stroke="#3f7db0"/>
<path d="M1615 367.500H1895M1615 429.500H1895M1615 449.500H1895M1615 469.500H1895M1615 492.500H1895M1615 987H1895" stroke="#a00000" stroke-width="1.200"/>
<path d="M1617 583H1895M1617 943H1895M1617 961H1895" stroke="#a00000" stroke-dasharray="1.500 2"/>

<g class="l" fill="#c0c0c0">
<text x="1617" y="96">卖五</text><text x="1617" y="114">卖四</text><text x="1617" y="132">卖三</text><text x="1617" y="150">卖二</text><text x="1617" y="168">卖一</text>
<text x="1617" y="188">买一</text><text x="1617" y="206">买二</text><text x="1617" y="224">买三</text><text x="1617" y="242">买四</text><text x="1617" y="260">买五</text>
<text x="1617" y="282">今开</text><text x="1617" y="300">最高</text><text x="1617" y="318">最低</text><text x="1617" y="338">现量</text><text x="1617" y="357">外盘</text>
<text x="1757" y="282">均价</text><text x="1757" y="300">量比</text><text x="1757" y="318">市值</text><text x="1757" y="338">总量</text><text x="1757" y="357">内盘</text>
<text x="1617" y="378">换手</text><text x="1617" y="397">净资</text><text x="1617" y="416">收益㈢</text>
<text x="1757" y="378">股本</text><text x="1757" y="397">流通</text>
<text x="1757" y="416" style="font-size:13px" textLength="42" lengthAdjust="spacingAndGlyphs">PE(动)</text>
<text x="1616" y="439" textLength="211" lengthAdjust="spacingAndGlyphs">注册制 已盈利 表决权无差异</text>
<text x="1616" y="459" textLength="142" lengthAdjust="spacingAndGlyphs">交易状态: 闭市阶段</text>
<text x="1617" y="481" textLength="68" lengthAdjust="spacingAndGlyphs">主力净额</text>
</g>
<text x="1765" y="459" class="m" fill="#c0c0c0">15:00:00</text>
<rect x="1689" y="475" width="11" height="12" rx="2" fill="#333" stroke="#888"/>
<rect x="1709" y="476" width="70" height="7" fill="#ff3232"/>
<text x="1854" y="481" class="e" style="font-size:15px" fill="#ff3232">7375万</text>
<text x="1893" y="481" class="e b" style="font-size:14px" fill="#ff3232">6%</text>

<g class="m" fill="#ff3232">
<text x="1716" y="96">23.35</text><text x="1716" y="114">23.34</text><text x="1716" y="132">23.33</text><text x="1716" y="150">23.32</text><text x="1716" y="168">23.31</text>
<text x="1716" y="188">23.30</text><text x="1716" y="206">23.29</text><text x="1716" y="224">23.28</text><text x="1716" y="242">23.27</text><text x="1716" y="260">23.26</text>
<text x="1716" y="282">24.38</text><text x="1716" y="300">24.45</text><text x="1716" y="318">23.27</text>
<text x="1704" y="357">227618</text>
<text x="1892" y="282" class="e">23.76</text>
</g>
<g class="m e" fill="#c8c800">
<text x="1892" y="96">149</text><text x="1892" y="114">55</text><text x="1892" y="132">237</text><text x="1892" y="150">131</text><text x="1892" y="168">168</text>
<text x="1892" y="188">339</text><text x="1892" y="206">1368</text><text x="1892" y="224">425</text><text x="1892" y="242">161</text><text x="1892" y="260">248</text>
</g>
<g class="m" fill="#c0c0c0">
<text x="1892" y="318" class="e">177.1亿</text>
<text x="1892" y="338" class="e">496088</text>
<text x="1752" y="378" class="e">11.34%</text>
<text x="1752" y="397" class="e">7.08</text>
<text x="1752" y="416" class="e">0.340</text>
<text x="1892" y="378" class="e">7.60亿</text>
<text x="1892" y="397" class="e">4.37亿</text>
<text x="1892" y="416" class="e">51.6</text>
</g>
<text x="1892" y="300" class="m e" fill="#c000c0">3.23</text>
<text x="1752" y="338" class="m e" fill="#c000c0">5267</text>
<text x="1892" y="357" class="m e" fill="#00ee00">268470</text>

<!-- ticks -->
<g class="m" fill="#c0c0c0"><text x="1617" y="502">14:55</text><text x="1617" y="592">14:56</text><text x="1617" y="952">14:57</text><text x="1617" y="970">15:00</text></g>
<g class="m" fill="#ff3232">
<text x="1717" y="502">23.28</text><text x="1717" y="520">23.30</text><text x="1717" y="538">23.29</text><text x="1717" y="556">23.29</text><text x="1717" y="574">23.30</text><text x="1717" y="592">23.29</text><text x="1717" y="610">23.30</text><text x="1717" y="628">23.30</text><text x="1717" y="646">23.29</text><text x="1717" y="664">23.30</text><text x="1717" y="682">23.29</text><text x="1717" y="700">23.29</text><text x="1717" y="718">23.29</text><text x="1717" y="736">23.29</text><text x="1717" y="754">23.29</text><text x="1717" y="772">23.30</text><text x="1717" y="790">23.29</text><text x="1717" y="808">23.28</text><text x="1717" y="826">23.28</text><text x="1717" y="844">23.29</text><text x="1717" y="862">23.29</text><text x="1717" y="880">23.29</text><text x="1717" y="898">23.28</text><text x="1717" y="916">23.29</text><text x="1717" y="934">23.29</text><text x="1717" y="952">23.29</text><text x="1717" y="970">23.30</text>
</g>
<g class="m e" fill="#c8c800">
<text x="1835" y="502">144</text><text x="1835" y="538">490</text><text x="1835" y="556">130</text><text x="1835" y="574">29</text><text x="1835" y="592">37</text><text x="1835" y="610">39</text><text x="1835" y="628">141</text><text x="1835" y="646">64</text><text x="1835" y="664">124</text><text x="1835" y="682">221</text><text x="1835" y="700">89</text><text x="1835" y="718">40</text><text x="1835" y="736">44</text><text x="1835" y="754">123</text><text x="1835" y="772">327</text><text x="1835" y="790">420</text><text x="1835" y="808">192</text><text x="1835" y="826">95</text><text x="1835" y="844">195</text><text x="1835" y="862">55</text><text x="1835" y="880">47</text><text x="1835" y="898">114</text><text x="1835" y="916">44</text><text x="1835" y="934">192</text><text x="1835" y="952">362</text>
</g>
<g class="m e" fill="#c000c0"><text x="1835" y="520">549</text><text x="1835" y="970">5267</text></g>
<g class="m" fill="#00d800">
<text x="1853" y="502">S</text><text x="1853" y="538">S</text><text x="1853" y="592">S</text><text x="1853" y="646">S</text><text x="1853" y="682">S</text><text x="1853" y="700">S</text><text x="1853" y="718">S</text><text x="1853" y="736">S</text><text x="1853" y="754">S</text><text x="1853" y="790">S</text><text x="1853" y="808">S</text><text x="1853" y="826">S</text><text x="1853" y="880">S</text><text x="1853" y="898">S</text><text x="1853" y="952">S</text>
</g>
<g class="m" fill="#ff3232">
<text x="1853" y="520">B</text><text x="1853" y="556">B</text><text x="1853" y="574">B</text><text x="1853" y="610">B</text><text x="1853" y="628">B</text><text x="1853" y="664">B</text><text x="1853" y="772">B</text><text x="1853" y="844">B</text><text x="1853" y="862">B</text><text x="1853" y="916">B</text><text x="1853" y="934">B</text>
</g>
<g class="m e" fill="#909090">
<text x="1892" y="502">37</text><text x="1892" y="520">57</text><text x="1892" y="538">42</text><text x="1892" y="556">16</text><text x="1892" y="574">7</text><text x="1892" y="592">8</text><text x="1892" y="610">7</text><text x="1892" y="628">15</text><text x="1892" y="646">8</text><text x="1892" y="664">23</text><text x="1892" y="682">59</text><text x="1892" y="700">21</text><text x="1892" y="718">6</text><text x="1892" y="736">11</text><text x="1892" y="754">26</text><text x="1892" y="772">52</text><text x="1892" y="790">97</text><text x="1892" y="808">49</text><text x="1892" y="826">33</text><text x="1892" y="844">38</text><text x="1892" y="862">12</text><text x="1892" y="880">7</text><text x="1892" y="898">17</text><text x="1892" y="916">5</text><text x="1892" y="934">26</text><text x="1892" y="952">10</text><text x="1892" y="970">417</text>
</g>

<!-- bottom tabs right -->
<path d="M1644 987V1005M1675 987V1005M1706 987V1005M1737 987V1005M1768 987V1005M1799 987V1005M1830 987V1005M1861 987V1005" stroke="#a00000"/>
<g class="c" fill="#b8b8b8">
<text x="1629.500" y="996" style="font-size:14px;fill:#54ffff">笔</text><text x="1660" y="996" style="font-size:14px">价</text><text x="1690.500" y="996" style="font-size:14px">细</text><text x="1721.500" y="996" style="font-size:14px">势</text><text x="1752.500" y="996" style="font-size:14px">联</text><text x="1783.500" y="996" style="font-size:14px">值</text><text x="1814.500" y="996" style="font-size:14px">主</text><text x="1845.500" y="996" style="font-size:14px">逆</text><text x="1878" y="996" style="font-size:14px">筹</text>
</g>

<!-- sidebar -->
<rect x="1895" y="30" width="25" height="1020" fill="#f0f0f0"/>
<path d="M1896 352V31" stroke="#e0e0e0"/>
<g fill="#fff" stroke="#2a7fd8" stroke-width="1.300">
<path d="M1900 42l7-6v3h7v6h-7v3z"/>
<path d="M1908 57l6 7h-3v7h-6v-7h-3z"/>
<path d="M1908 96l6-7h-3v-7h-6v7h-3z"/>
<rect x="1901" y="104" width="14" height="13"/>
<rect x="1901" y="127" width="14" height="13"/>
<rect x="1901" y="150" width="14" height="13"/>
<rect x="1903" y="197" width="11" height="9"/><rect x="1901" y="200" width="13" height="9"/>
<rect x="1901" y="221" width="14" height="12"/>
<rect x="1901" y="243" width="14" height="13"/>
<rect x="1901" y="290" width="14" height="12"/>
<rect x="1901" y="313" width="14" height="13"/>
<rect x="1901" y="335" width="14" height="12"/>
<rect x="1901" y="366" width="14" height="12"/>
<rect x="1901" y="490" width="14" height="12"/>
<rect x="1901" y="512" width="14" height="12"/>
</g>
<path d="M1903 107h6M1903 110h6M1903 113h6" stroke="#2a8030"/><path d="M1910 107h3M1910 110h3" stroke="#d02020"/>
<path d="M1903 130h10M1903 133h10M1903 136h10" stroke="#c02020" stroke-dasharray="3 1"/>
<path d="M1903 160l3-3 2 2 5-5" fill="none" stroke="#d02020"/>
<path d="M1904 176h4v8h-4zM1912 172h3v8h-3z" fill="#d02020"/><path d="M1901 178h3v7h-3zM1908 175h3v9h-3z" fill="#20a030"/>
<path d="M1903 204h9M1903 206h9" stroke="#555"/>
<text x="1908" y="227" class="c b" style="font-size:10px" fill="#1a50c0">F10</text>
<path d="M1904 246h4v3h-4zM1904 251h4v3h-4zM1910 248h4v3h-4z" fill="#e8b030"/>
<rect x="1903" y="268" width="10" height="10" fill="#e07020"/>
<text x="1908" y="296" class="c b" style="font-size:10px" fill="#1a50c0">F12</text>
<text x="1908" y="319" class="c b" style="font-size:9px" fill="#107060">fx</text>
<circle cx="1908" cy="341" r="3.500" fill="none" stroke="#2a5fc0"/>
<path d="M1897 356H1918M1897 480H1918" stroke="#b0b0b0"/>
<path d="M1903 371l3-2 3 2 4-2M1903 375l3-2 3 2 4-2" fill="none" stroke="#d02020"/>
<text x="1908" y="395" class="c b" style="font-size:10px" fill="#2040c0">RSI</text>
<text x="1908" y="418" class="c b" style="font-size:15px" fill="#d02020">S</text>
<path d="M1908 434l3 3h-2v4h4v-2l3 3-3 3v-2h-4v4h2l-3 3-3-3h2v-4h-4v2l-3-3 3-3v2h4v-4h-2z" fill="#1a50c0"/>
<path d="M1901 470l2-5 9-9 4 3-9 9z" fill="#e8a030" stroke="#905020" stroke-width=".5"/>
<text x="1908" y="496" class="c b" style="font-size:10px" fill="#1a50c0">FS</text>
<circle cx="1908" cy="518" r="4" fill="none" stroke="#30a040" stroke-width="2"/>
<rect x="1897" y="645" width="23" height="23" fill="#f8f8f8" stroke="#d8d8d8"/>
<g class="c" fill="#1a4a9a">
<text x="1908" y="540">1</text><text x="1908" y="564">5</text><text x="1908" y="587">15</text><text x="1908" y="610">30</text><text x="1908" y="633">60</text>
<text x="1908" y="657" style="font-size:14px">日</text><text x="1908" y="679" style="font-size:14px">周</text><text x="1908" y="702" style="font-size:14px">月</text><text x="1908" y="725">N</text><text x="1908" y="748" style="font-size:14px">多</text><text x="1908" y="771" style="font-size:14px">季</text><text x="1908" y="794" style="font-size:14px">年</text>
</g>
</svg>
</body>
</html>
